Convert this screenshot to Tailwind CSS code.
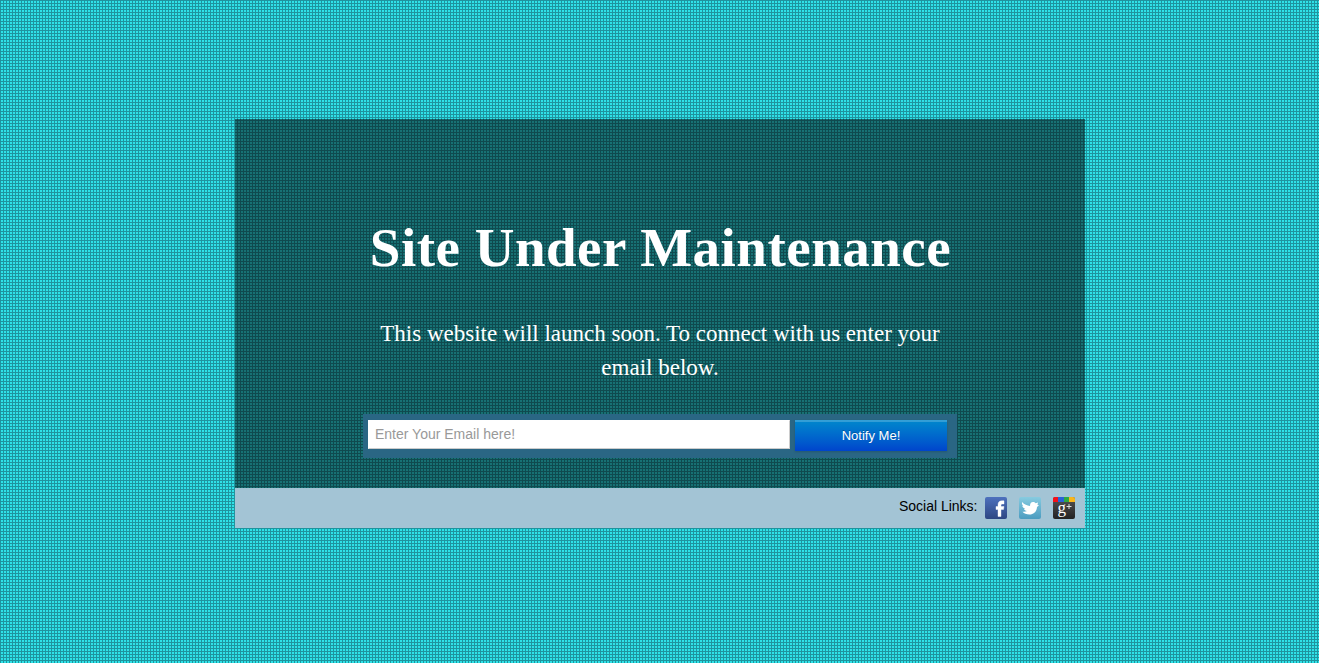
<!DOCTYPE html>
<html lang="en"><head><meta charset="utf-8"><title>Site Under Maintenance</title>
<script src="https://cdn.jsdelivr.net/npm/@tailwindcss/browser@4"></script></head>
<body class="h-[663px] overflow-hidden bg-[#2fe2e8] bg-[linear-gradient(to_right,#1f949e_1px,transparent_1px),linear-gradient(to_bottom,#1f949e_1px,transparent_1px)] bg-[size:3px_3px] pt-[119px]">
<main class="ml-[235px] w-[850px]">
<section class="h-[369px] bg-black/50 flex flex-col items-center text-white font-['Liberation_Serif',serif]">
<h1 class="mt-[96px] h-[66px] text-[55px] leading-[66px] pl-[1px] font-bold tracking-[0.5px] whitespace-nowrap">Site Under Maintenance</h1>
<p class="mt-[36px] w-[594px] px-[10px] text-center text-[23px] leading-[34px]">This website will launch soon. To connect with us enter your email below.</p>
<form class="mt-[29px] w-[594px] h-[44px] bg-[#2a6684] flex items-start gap-[5px] pl-[5px] pt-[6px] font-['Liberation_Sans',sans-serif]">
<input type="text" placeholder="Enter Your Email here!" class="w-[422px] h-[29px] bg-white border border-t-white border-l-white border-r-[#ccc] border-b-[#ccc] px-[6px] pb-[2px] text-[14px] placeholder:text-[#999] outline-none">
<button type="button" class="w-[152px] h-[31px] bg-linear-to-b from-[#0088cc] to-[#0044cc] text-[13px] text-white shadow-[inset_0_2px_0_rgba(255,255,255,0.2),0_1px_2px_rgba(0,0,0,0.15)] [text-shadow:0_-1px_0_rgba(0,0,0,0.25)]">Notify Me!</button>
</form>
</section>
<footer class="h-[40px] bg-[#a3c4d5] flex items-start justify-end pr-[9px] pt-[8px] font-['Liberation_Sans',sans-serif] text-[14px] text-black">
<span class="leading-[20px] mr-[6.5px]">Social Links:</span>
<div class="flex gap-[10px]">
<svg width="24" height="24" viewBox="0 0 24 24"><defs><linearGradient id="f" x2="0" y2="1"><stop stop-color="#4e71bd"/><stop offset="1" stop-color="#2d4783"/></linearGradient><linearGradient id="t" x2="0" y2="1"><stop stop-color="#87cbe0"/><stop offset="1" stop-color="#4b9cc0"/></linearGradient><linearGradient id="g" x2="0" y2="1"><stop stop-color="#555"/><stop offset="1" stop-color="#222"/></linearGradient></defs><rect x="1" y="1" width="22" height="22" rx="2" fill="url(#f)"/><path d="M14 20.500v-7h-2v-3h2V9c0-3 1.500-4.200 4-4.200h2V8h-1.500C17.400 8 17 8.500 17 9.500v1h3l-.5 3H17v7z" fill="#fff" stroke="#fff" stroke-width=".4"/></svg>
<svg width="24" height="24" viewBox="0 0 24 24"><rect x="1" y="1" width="22" height="22" rx="2" fill="url(#t)"/><path d="M4 6c2.500 2.500 5 3.700 8 4C12 7.500 13 6 15 6c1.200 0 2 .5 2.700 1.200L20 6.500 19.500 9l1.500.3L19 11c-.3 5-3.500 7.500-7.500 7.500-3 0-5.500-1-7-2.800 1.500.2 3.100.1 4.500-.7-1.700-.2-2.600-1-3-2h1.300C5.500 12.300 4.500 11.200 4.300 9.800l1.200.4C4.200 9.200 3.800 7.500 4 6z" fill="#fff"/></svg>
<svg width="24" height="24" viewBox="0 0 24 24"><rect x="1" y="1" width="22" height="22" rx="2" fill="url(#g)"/><path d="M1 6V3q0-2 2-2h3v5z" fill="#f51018"/><path d="M6 1h6v5H6z" fill="#2a62d5"/><path d="M12 1h5v5h-5z" fill="#2da944"/><path d="M17 1h4q2 0 2 2v3h-6z" fill="#f8b51b"/><text x="5.500" y="17" font-size="17" fill="#fff" font-family="Liberation Serif, serif">g</text><path d="M14.500 10.500h5M17 8v5" stroke="#ddd" stroke-width="1"/></svg>
</div></footer>
</main></body></html>
